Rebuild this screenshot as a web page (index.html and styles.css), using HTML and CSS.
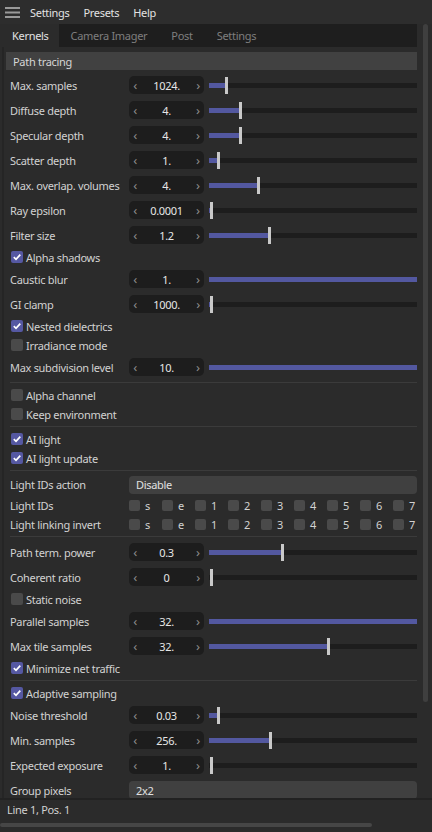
FILE: index.html
```html
<!DOCTYPE html>
<html>
<head>
<meta charset="utf-8">
<link rel="stylesheet" href="styles.css">
</head>
<body>
<div class="menubar">
  <svg class="menu-icon" width="15" height="11" viewBox="0 0 15 11"><rect x="0" y="0" width="15" height="2" fill="#9a9a9a"/><rect x="0" y="4.5" width="15" height="2" fill="#9a9a9a"/><rect x="0" y="9" width="15" height="2" fill="#9a9a9a"/></svg>
  <span class="menu-item">Settings</span>
  <span class="menu-item">Presets</span>
  <span class="menu-item">Help</span>
</div>
<div class="main">
  <div class="panel">
    <div class="tabs">
      <div class="tab active">Kernels</div>
      <div class="tab">Camera Imager</div>
      <div class="tab">Post</div>
      <div class="tab">Settings</div>
    </div>
    <div class="content">
      <div class="section-header">Path tracing</div>

      <div class="row"><span class="label">Max. samples</span><div class="num"><span class="arr">‹</span><span class="val">1024.</span><span class="arr">›</span></div><div class="slider"><div class="fill" style="width:16px"></div><div class="handle" style="left:16px"></div></div></div>
      <div class="row"><span class="label">Diffuse depth</span><div class="num"><span class="arr">‹</span><span class="val">4.</span><span class="arr">›</span></div><div class="slider"><div class="fill" style="width:30px"></div><div class="handle" style="left:30px"></div></div></div>
      <div class="row"><span class="label">Specular depth</span><div class="num"><span class="arr">‹</span><span class="val">4.</span><span class="arr">›</span></div><div class="slider"><div class="fill" style="width:30px"></div><div class="handle" style="left:30px"></div></div></div>
      <div class="row"><span class="label">Scatter depth</span><div class="num"><span class="arr">‹</span><span class="val">1.</span><span class="arr">›</span></div><div class="slider"><div class="fill" style="width:8px"></div><div class="handle" style="left:8px"></div></div></div>
      <div class="row"><span class="label">Max. overlap. volumes</span><div class="num"><span class="arr">‹</span><span class="val">4.</span><span class="arr">›</span></div><div class="slider"><div class="fill" style="width:48px"></div><div class="handle" style="left:48px"></div></div></div>
      <div class="row"><span class="label">Ray epsilon</span><div class="num"><span class="arr">‹</span><span class="val">0.0001</span><span class="arr">›</span></div><div class="slider"><div class="fill" style="width:1px"></div><div class="handle" style="left:1px"></div></div></div>
      <div class="row"><span class="label">Filter size</span><div class="num"><span class="arr">‹</span><span class="val">1.2</span><span class="arr">›</span></div><div class="slider"><div class="fill" style="width:59px"></div><div class="handle" style="left:59px"></div></div></div>

      <div class="check-row"><span class="cb on"><svg viewBox="0 0 12 12" width="12" height="12"><path d="M2.8 6.2 L5 8.3 L9.3 3.6" fill="none" stroke="#fff" stroke-width="1.7"/></svg></span><span>Alpha shadows</span></div>

      <div class="row"><span class="label">Caustic blur</span><div class="num"><span class="arr">‹</span><span class="val">1.</span><span class="arr">›</span></div><div class="slider"><div class="fill" style="width:208px"></div></div></div>
      <div class="row"><span class="label">GI clamp</span><div class="num"><span class="arr">‹</span><span class="val">1000.</span><span class="arr">›</span></div><div class="slider"><div class="fill" style="width:1px"></div><div class="handle" style="left:1px"></div></div></div>

      <div class="check-row"><span class="cb on"><svg viewBox="0 0 12 12" width="12" height="12"><path d="M2.8 6.2 L5 8.3 L9.3 3.6" fill="none" stroke="#fff" stroke-width="1.7"/></svg></span><span>Nested dielectrics</span></div>
      <div class="check-row"><span class="cb"></span><span>Irradiance mode</span></div>

      <div class="row"><span class="label">Max subdivision level</span><div class="num"><span class="arr">‹</span><span class="val">10.</span><span class="arr">›</span></div><div class="slider"><div class="fill" style="width:208px"></div></div></div>

      <div class="sep"></div>
      <div class="check-row"><span class="cb"></span><span>Alpha channel</span></div>
      <div class="check-row"><span class="cb"></span><span>Keep environment</span></div>
      <div class="sep"></div>
      <div class="check-row"><span class="cb on"><svg viewBox="0 0 12 12" width="12" height="12"><path d="M2.8 6.2 L5 8.3 L9.3 3.6" fill="none" stroke="#fff" stroke-width="1.7"/></svg></span><span>AI light</span></div>
      <div class="check-row"><span class="cb on"><svg viewBox="0 0 12 12" width="12" height="12"><path d="M2.8 6.2 L5 8.3 L9.3 3.6" fill="none" stroke="#fff" stroke-width="1.7"/></svg></span><span>AI light update</span></div>
      <div class="sep"></div>

      <div class="row drop-row"><span class="label">Light IDs action</span><div class="dropdown">Disable</div></div>
      <div class="row id-row"><span class="label">Light IDs</span>
        <div class="ids">
          <span class="id"><span class="cb small"></span>s</span><span class="id"><span class="cb small"></span>e</span><span class="id"><span class="cb small"></span>1</span><span class="id"><span class="cb small"></span>2</span><span class="id"><span class="cb small"></span>3</span><span class="id"><span class="cb small"></span>4</span><span class="id"><span class="cb small"></span>5</span><span class="id"><span class="cb small"></span>6</span><span class="id"><span class="cb small"></span>7</span>
        </div>
      </div>
      <div class="row id-row"><span class="label">Light linking invert</span>
        <div class="ids">
          <span class="id"><span class="cb small"></span>s</span><span class="id"><span class="cb small"></span>e</span><span class="id"><span class="cb small"></span>1</span><span class="id"><span class="cb small"></span>2</span><span class="id"><span class="cb small"></span>3</span><span class="id"><span class="cb small"></span>4</span><span class="id"><span class="cb small"></span>5</span><span class="id"><span class="cb small"></span>6</span><span class="id"><span class="cb small"></span>7</span>
        </div>
      </div>
      <div class="sep"></div>

      <div class="row"><span class="label">Path term. power</span><div class="num"><span class="arr">‹</span><span class="val">0.3</span><span class="arr">›</span></div><div class="slider"><div class="fill" style="width:72px"></div><div class="handle" style="left:72px"></div></div></div>
      <div class="row"><span class="label">Coherent ratio</span><div class="num"><span class="arr">‹</span><span class="val">0</span><span class="arr">›</span></div><div class="slider"><div class="fill" style="width:0px"></div><div class="handle" style="left:1px"></div></div></div>
      <div class="check-row"><span class="cb"></span><span>Static noise</span></div>
      <div class="row"><span class="label">Parallel samples</span><div class="num"><span class="arr">‹</span><span class="val">32.</span><span class="arr">›</span></div><div class="slider"><div class="fill" style="width:208px"></div></div></div>
      <div class="row"><span class="label">Max tile samples</span><div class="num"><span class="arr">‹</span><span class="val">32.</span><span class="arr">›</span></div><div class="slider"><div class="fill" style="width:118px"></div><div class="handle" style="left:118px"></div></div></div>
      <div class="check-row"><span class="cb on"><svg viewBox="0 0 12 12" width="12" height="12"><path d="M2.8 6.2 L5 8.3 L9.3 3.6" fill="none" stroke="#fff" stroke-width="1.7"/></svg></span><span>Minimize net traffic</span></div>
      <div class="sep"></div>

      <div class="check-row"><span class="cb on"><svg viewBox="0 0 12 12" width="12" height="12"><path d="M2.8 6.2 L5 8.3 L9.3 3.6" fill="none" stroke="#fff" stroke-width="1.7"/></svg></span><span>Adaptive sampling</span></div>
      <div class="row"><span class="label">Noise threshold</span><div class="num"><span class="arr">‹</span><span class="val">0.03</span><span class="arr">›</span></div><div class="slider"><div class="fill" style="width:8px"></div><div class="handle" style="left:8px"></div></div></div>
      <div class="row"><span class="label">Min. samples</span><div class="num"><span class="arr">‹</span><span class="val">256.</span><span class="arr">›</span></div><div class="slider"><div class="fill" style="width:60px"></div><div class="handle" style="left:60px"></div></div></div>
      <div class="row"><span class="label">Expected exposure</span><div class="num"><span class="arr">‹</span><span class="val">1.</span><span class="arr">›</span></div><div class="slider"><div class="fill" style="width:0px"></div><div class="handle" style="left:1px"></div></div></div>
      <div class="row"><span class="label">Group pixels</span><div class="dropdown wide">2x2</div></div>
    </div>
  </div>
  <div class="vscroll"><div class="vthumb"></div></div>
</div>
<div class="status">Line 1, Pos. 1</div>
<div class="hscroll"><div class="hthumb"></div></div>
</body>
</html>
```

FILE: styles.css
```css
* { box-sizing: border-box; }
html, body { margin: 0; padding: 0; }
body {
  width: 432px;
  height: 832px;
  overflow: hidden;
  background: #2b2b2b;
  font-family: "Noto Sans", "Open Sans", sans-serif;
  font-size: 11px;
  letter-spacing: -0.3px;
  color: #d2d2d2;
}
.menubar {
  height: 24px;
  display: flex;
  align-items: center;
  padding-left: 5px;
  background: #2d2d2d;
}
.menu-icon { margin-right: 10px; }
.menu-item { font-size: 11px; color: #e2e2e2; margin-right: 14px; }

.main { display: flex; height: 774px; }
.panel { width: 417px; padding-left: 2px; display: flex; flex-direction: column; overflow: hidden; }
.tabs {
  height: 23px;
  flex: none;
  margin-left: 3px;
  display: flex;
  background: #1e1e1e;
}
.tab {
  padding: 0 12px;
  display: flex;
  align-items: center;
  color: #7e7e7e;
}
.tab.active { background: #2b2b2b; color: #e2e2e2; padding: 0 10px 0 7px; }
.content { flex: 1; padding: 5px 0 0 1px; border-left: 2px solid #252525; }
.section-header {
  height: 18px;
  margin: 0 0 2.5px 1px;
  background: #414141;
  padding-left: 7px;
  display: flex;
  align-items: center;
  color: #d6d6d6;
}
.row {
  height: 25px;
  display: grid;
  grid-template-columns: 114px 75px 208px;
  column-gap: 5px;
  align-items: center;
  padding-left: 5px;
}
.label { white-space: nowrap; }
.num {
  height: 18px;
  background: #1d1d1d;
  border-radius: 5px;
  display: flex;
  align-items: center;
  justify-content: space-between;
  padding: 0 3px 0 3px;
}
.arr { color: #8c8c8c; font-size: 13px; line-height: 1; width: 6px; text-align: center; }
.val { color: #e6e6e6; }
.slider {
  position: relative;
  height: 17px;
  display: flex;
  align-items: center;
  background: linear-gradient(#1d1d1d, #1d1d1d) center / 100% 5px no-repeat;
}
.fill { height: 5px; background: #5358a0; }
.handle { position: absolute; top: 0; width: 3px; height: 17px; background: #c9c9c9; }

.check-row {
  height: 19px;
  display: flex;
  align-items: center;
  padding-left: 6px;
  gap: 3px;
}
.cb {
  width: 12px;
  height: 12px;
  flex: none;
  border-radius: 2px;
  background: #4a4a4a;
  display: inline-flex;
}
.cb.on { background: #5558a2; }
.sep { height: 6px; margin-left: 5px; display: flex; align-items: center; }
.sep::before { content: ""; flex: 1; height: 1px; background: #3b3b3b; }

.drop-row { grid-template-columns: 114px 288px; height: 22px; }
.dropdown {
  height: 18px;
  background: #404040;
  border-radius: 4px;
  padding-left: 7px;
  display: flex;
  align-items: center;
  color: #e0e0e0;
}
.dropdown.wide { grid-column: 2 / 4; }
.id-row { height: 19px; grid-template-columns: 114px 288px; }
.ids { display: flex; }
.id { width: 33px; flex: none; display: flex; align-items: center; gap: 5px; color: #d2d2d2; }
.cb.small { width: 11px; height: 11px; }

.vscroll { width: 15px; padding: 0 4px 0 6px; }
.vthumb { width: 5px; height: 678px; background: #3f3f3f; border-radius: 3px; }

.status {
  height: 20px;
  border-top: 2px solid #222;
  padding-left: 7px;
  display: flex;
  align-items: center;
  color: #d2d2d2;
}
.hscroll { height: 14px; padding-top: 5px; }
.hthumb { width: 372px; height: 4px; background: #464646; border-radius: 2px; }
```
